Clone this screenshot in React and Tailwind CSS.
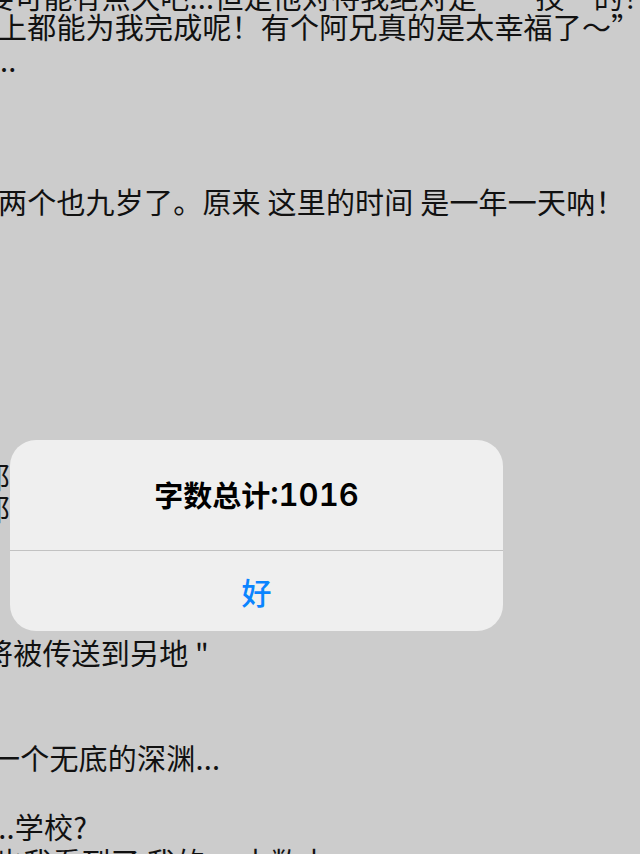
export default function App() {
  const line =
    "h-[35px] leading-[35px] text-[29px] tracking-[0.2px] whitespace-nowrap text-[#111]";
  return (
    <div className="relative w-[640px] h-[854px] overflow-hidden bg-[#cccccc] font-['Noto_Sans_CJK_SC',sans-serif]">
      <div className="flex flex-col -mt-[21px]">
        <div className={`${line} -ml-[15px]`}>要可能有点久吧...但是他对待我绝对是“一技”的！也</div>
        <div className={`${line} -mt-[5px] -ml-[2px]`}>上都能为我完成呢！有个阿兄真的是太幸福了～”</div>
        <div className={`${line} -mt-[2px] ml-0`}>..</div>
        <div className={`${line} mt-[107px] -ml-[2px]`}>两个也九岁了。原来 这里的时间 是一年一天呐！</div>
        <div className={`${line} mt-[240px] -ml-[19px]`}>那给了我们</div>
        <div className={`${line} -mt-[3px] -ml-[19px]`}>那品尝</div>
        <div className={`${line} mt-[109px] -ml-[16px]`}>将被传送到另地 "</div>
        <div className={`${line} mt-[70px] -ml-[9px]`}>一个无底的深渊...</div>
        <div className={`${line} mt-[34px] -ml-[10px]`}>...学校?</div>
        <div className={`${line} -ml-[6px]`}>也我看到了 我的 一本数本</div>
      </div>

      <div className="absolute left-[10px] top-[440px] w-[493px] h-[191px] rounded-[26px] bg-[#efefef] flex flex-col overflow-hidden">
        <div className="h-[110px] flex items-center justify-center font-semibold text-black">
          <span className="text-[29px]">字数总计</span>
          <span className="text-[31px] tabular-nums font-['Inter',sans-serif]">:1016</span>
        </div>
        <div className="h-px bg-[#c2c2c2]" />
        <div className="flex-1 flex items-center justify-center text-[30px] font-medium text-[#0a84ff]">
          好
        </div>
      </div>
    </div>
  );
}
